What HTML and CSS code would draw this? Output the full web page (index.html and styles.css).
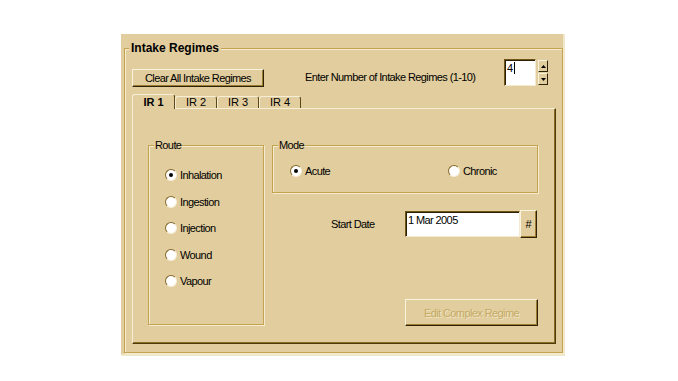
FILE: index.html
```html
<!DOCTYPE html>
<html>
<head>
<meta charset="utf-8">
<link rel="stylesheet" href="styles.css">
</head>
<body>
<div class="window">
  <div class="group main">
    <span class="legend main-legend">Intake Regimes</span>
    <div class="toprow">
      <button class="btn clear">Clear All Intake Regimes</button>
      <span class="count-label">Enter Number of Intake Regimes (1-10)</span>
      <div class="spin">
        <div class="spin-input"><span>4</span><i class="caret"></i></div>
        <div class="spin-btns">
          <span class="sbtn"><svg width="5" height="3" viewBox="0 0 5 3"><path d="M2.5 0 L5 3 L0 3 Z" fill="#000"/></svg></span>
          <span class="sbtn"><svg width="5" height="3" viewBox="0 0 5 3"><path d="M0 0 L5 0 L2.5 3 Z" fill="#000"/></svg></span>
        </div>
      </div>
    </div>
    <div class="tabs">
      <div class="tab active">IR 1</div>
      <div class="tab">IR 2</div>
      <div class="tab">IR 3</div>
      <div class="tab">IR 4</div>
    </div>
    <div class="tabpanel">
      <div class="group route">
        <span class="legend">Route</span>
        <div class="radio-list">
          <div class="radio"><span class="circle checked"></span><span>Inhalation</span></div>
          <div class="radio"><span class="circle"></span><span>Ingestion</span></div>
          <div class="radio"><span class="circle"></span><span>Injection</span></div>
          <div class="radio"><span class="circle"></span><span>Wound</span></div>
          <div class="radio"><span class="circle"></span><span>Vapour</span></div>
        </div>
      </div>
      <div class="rightcol">
        <div class="group mode">
          <span class="legend">Mode</span>
          <div class="radio acute"><span class="circle checked"></span><span>Acute</span></div>
          <div class="radio"><span class="circle"></span><span>Chronic</span></div>
        </div>
        <div class="daterow">
          <span class="date-label">Start Date</span>
          <div class="date-input">1 Mar 2005</div>
          <button class="btn hash">#</button>
        </div>
        <button class="btn edit" disabled>Edit Complex Regime</button>
      </div>
    </div>
  </div>
</div>
</body>
</html>
```
FILE: styles.css
```css
* { box-sizing: border-box; }
html, body { margin: 0; padding: 0; background: #fff; }
body {
  width: 678px;
  height: 381px;
  overflow: hidden;
  font-family: "Liberation Sans", Arial, sans-serif;
  font-size: 11px;
  letter-spacing: -0.6px;
  color: #000;
  padding-top: 34px;
}
.window {
  margin-left: 121px;
  width: 444px;
  height: 322px;
  background: #e1cd9d;
  border-right: 2px solid #f1e7c9;
  border-bottom: 2px solid #f1e7c9;
  padding: 14px 0 0 3px;
}
.group {
  position: relative;
  border: 1px solid #c3a350;
  box-shadow: inset 1px 1px 0 #f5ecd0, 1px 1px 0 #f5ecd0;
}
.legend {
  position: absolute;
  top: -7px;
  left: 5px;
  padding: 0 1px;
  background: #e1cd9d;
  line-height: 13px;
  white-space: nowrap;
}
.main-legend {
  top: -8px;
  left: 4px;
  padding: 0 2px;
  font-size: 12px;
  font-weight: bold;
  letter-spacing: 0;
  line-height: 14px;
}
.main {
  width: 439px;
  height: 305px;
  padding: 0 0 0 7px;
}
.toprow {
  display: flex;
  align-items: flex-start;
  padding-top: 10px;
  height: 38px;
}
.btn {
  font: inherit;
  letter-spacing: inherit;
  color: #000;
  background: #e1cd9d;
  border: 1px solid;
  border-color: #faf3de #2e2306 #2e2306 #faf3de;
  box-shadow: inset -1px -1px 0 #9b7c30;
  padding: 0;
  margin: 0;
  text-align: center;
}
.clear {
  width: 132px;
  height: 18px;
  margin-top: 10px;
}
.count-label {
  margin: 12px 0 0 41px;
  line-height: 13px;
  white-space: nowrap;
}
.spin {
  margin-left: auto;
  margin-right: 14px;
  display: flex;
  gap: 2px;
}
.spin-input {
  width: 32px;
  height: 27px;
  background: #fff;
  border: 1px solid;
  border-color: #6f5616 #f3ead0 #f3ead0 #6f5616;
  box-shadow: inset 1px 1px 0 #2a2008;
  padding: 2px 0 0 2px;
  display: flex;
  align-items: flex-start;
  line-height: 12px;
}
.caret {
  display: block;
  width: 1px;
  height: 12px;
  background: #000;
  margin-left: 1px;
}
.spin-btns {
  display: flex;
  flex-direction: column;
  gap: 1px;
  padding-top: 1px;
}
.sbtn {
  width: 10px;
  height: 12px;
  display: flex;
  align-items: center;
  justify-content: center;
  background: #e1cd9d;
  border: 1px solid;
  border-color: #faf3de #2e2306 #2e2306 #faf3de;
}
.sbtn svg { display: block; }
.tabs {
  display: flex;
  align-items: flex-end;
  height: 14px;
  margin-top: 7px;
}
.tab {
  width: 42px;
  height: 12px;
  background: #e1cd9d;
  border: 1px solid;
  border-color: #f6eed6 #5c4612 transparent #f6eed6;
  border-bottom: 0;
  border-radius: 3px 3px 0 0;
  text-align: center;
  line-height: 11px;
  letter-spacing: 0;
}
.tab.active {
  position: relative;
  z-index: 2;
  width: 43px;
  height: 15px;
  margin-bottom: -1px;
  font-weight: bold;
  line-height: 14px;
}
.tabpanel {
  width: 424px;
  height: 236px;
  border-top: 1px solid #f6eed6;
  border-left: 1px solid #f6eed6;
  border-right: 1px solid #4e3b0c;
  border-bottom: 1px solid #4e3b0c;
  box-shadow: inset -1px -1px 0 #8c6c22;
  display: flex;
  align-items: flex-start;
  padding: 36px 0 0 15px;
}
.route {
  width: 116px;
  height: 180px;
}
.radio-list {
  display: flex;
  flex-direction: column;
  padding: 16px 0 0 16px;
}
.radio {
  display: flex;
  align-items: center;
  height: 26.5px;
  gap: 3px;
  white-space: nowrap;
}
.circle {
  flex: none;
  width: 12px;
  height: 12px;
  border-radius: 50%;
  background: #fff;
  border: 1px solid;
  border-color: #84682a #f6eed6 #f6eed6 #84682a;
  display: flex;
  align-items: center;
  justify-content: center;
}
.circle.checked::after {
  content: "";
  width: 4px;
  height: 4px;
  border-radius: 50%;
  background: #000;
}
.rightcol {
  margin-left: 8px;
  display: flex;
  flex-direction: column;
}
.mode {
  width: 266px;
  height: 48px;
  display: flex;
  align-items: center;
  padding: 3px 0 0 17px;
}
.mode .radio { height: 14px; }
.acute { width: 158px; }
.daterow {
  display: flex;
  align-items: center;
  margin-top: 17px;
  height: 28px;
}
.date-label {
  margin-left: 59px;
  width: 74px;
  white-space: nowrap;
}
.date-input {
  width: 115px;
  height: 26px;
  background: #fff;
  border: 1px solid;
  border-color: #6f5616 #f3ead0 #f3ead0 #6f5616;
  box-shadow: inset 1px 1px 0 #2a2008;
  padding: 2px 0 0 2px;
  line-height: 12px;
}
.hash {
  width: 17px;
  height: 28px;
  letter-spacing: 0;
}
.edit {
  margin-top: 61px;
  margin-left: 133px;
  width: 133px;
  height: 27px;
  color: #c6aa64;
  text-shadow: 1px 1px 0 #efe4c4;
}
```
